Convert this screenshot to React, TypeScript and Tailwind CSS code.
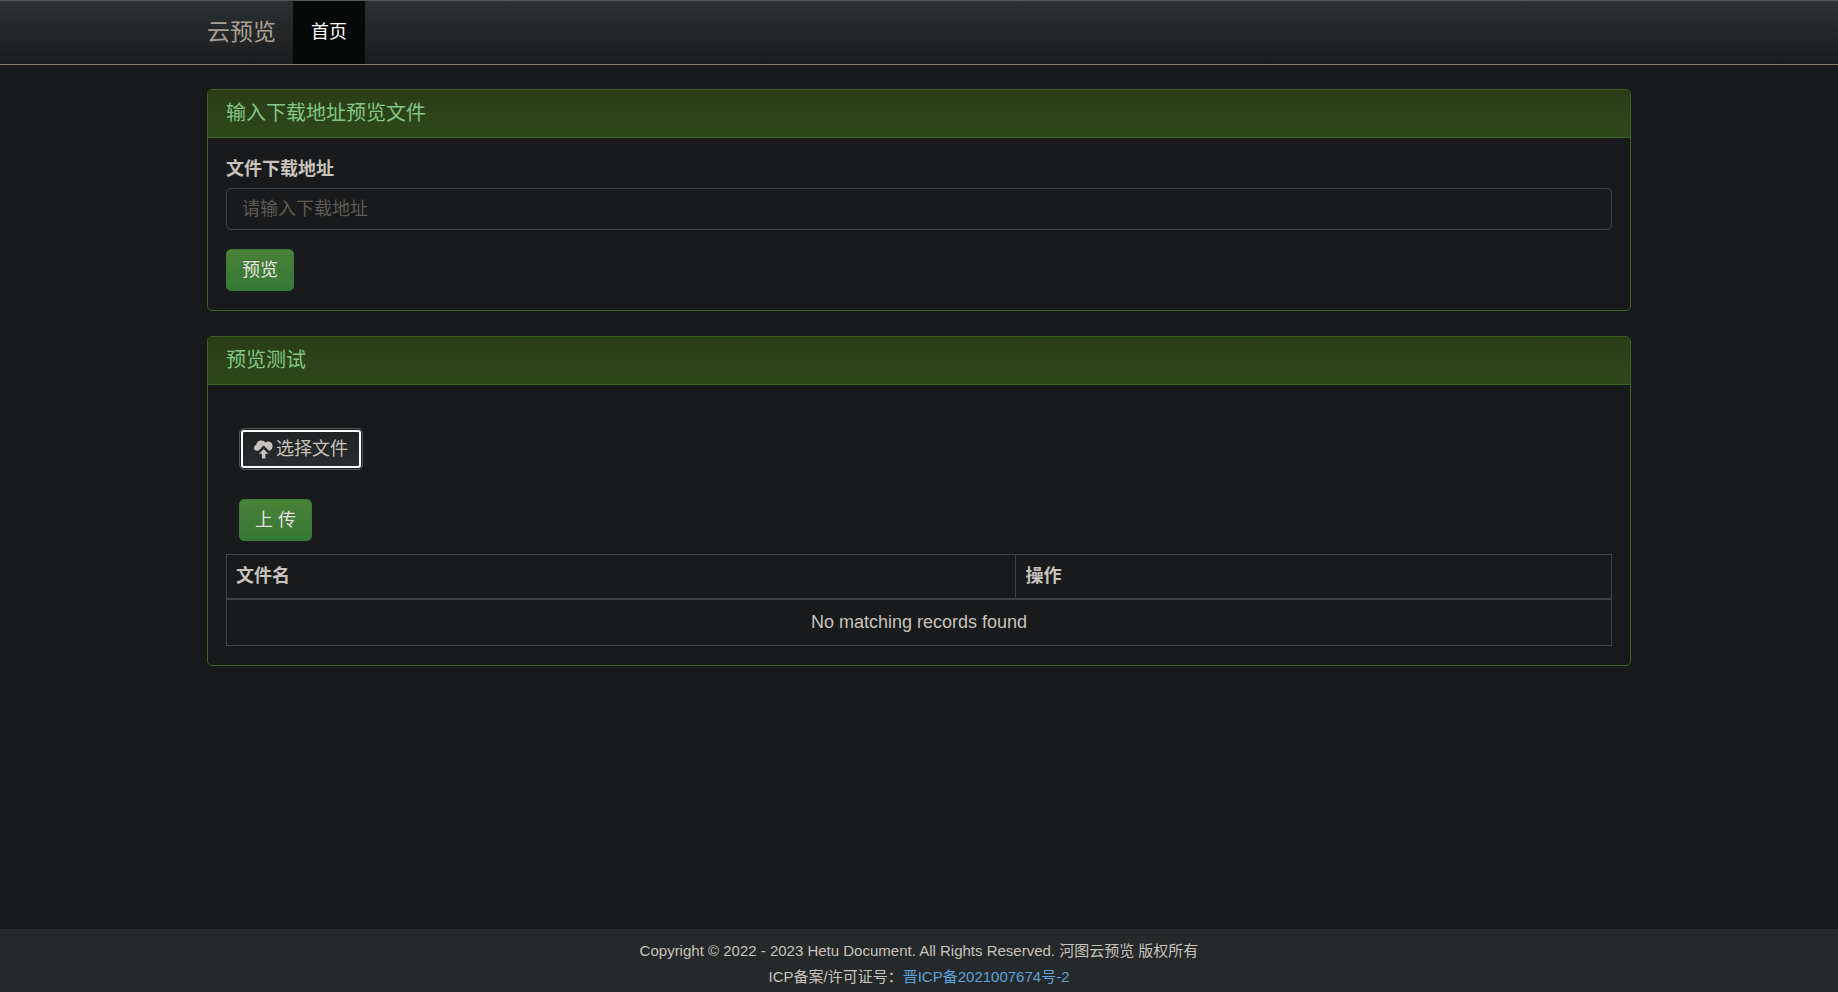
import { useState } from 'react';
import type { ReactNode } from 'react';

interface FileRecord {
  id: string;
  name: string;
}

const container = 'mx-auto w-full max-w-[1462px] px-[19px]';
const btn = 'rounded-[5px] border py-2 text-[18px] leading-6';
const btnGreen = `${btn} px-[15px] border-[#387c38] bg-linear-to-b from-[#4a8239] to-[#347834] text-[#e8e6e3] [text-shadow:0_-1px_0_rgba(0,0,0,0.2)]`;
const cell = 'border border-[#3f4346] px-[9px] text-[18px] leading-[25px]';

function CloudUploadIcon() {
  return (
    <svg className="mr-[3px] shrink-0" width="19" height="19" viewBox="0 0 19 19" fill="currentColor" aria-hidden="true">
      <path d="M3.4 10.8A3.1 3.1 0 0 1 0 7.8a3.2 3.2 0 0 1 2.3-3A4.9 4.9 0 0 1 7 0.6a5.4 5.4 0 0 1 4.6 2A4.2 4.2 0 0 1 18.6 6.2c0 2.3-1.4 4-3.6 4.5L9.7 5.6 4.5 10.8z" />
      <path d="M9.7 8.9l4.6 4.8h-2.9v4.7H7.9v-4.7H5z" />
    </svg>
  );
}

function Panel({ title, children }: { title: string; children: ReactNode }) {
  return (
    <section className="mb-[25px] rounded-[5px] border border-[#3e6224]">
      <div className="rounded-t-[4px] border-b border-[#3e6224] bg-linear-to-b from-[#2a3d18] to-[#2f481b] px-[18px] py-3">
        <h3 className="text-[20px] leading-[23px] text-[#83c784]">{title}</h3>
      </div>
      <div className="px-[18px] py-[19px]">{children}</div>
    </section>
  );
}

export default function App() {
  const [url, setUrl] = useState('');
  const [records] = useState<FileRecord[]>([]);

  return (
    <div className="flex min-h-screen flex-col bg-[#181a1b] font-['Liberation_Sans','Noto_Sans_CJK_SC',sans-serif] text-[18px] leading-[25px] text-[#c8c3bc]">
      {/* NAVBAR */}
      <nav className="border-t border-b border-t-[#54595c] border-b-[#8c8272] bg-linear-to-b from-[#2d3133] to-[#1b1c1d]">
        <div className={`${container} flex`}>
          <a href="#" className="py-[19px] pr-[17px] text-[23px] leading-[25px] text-[#a8a095]">云预览</a>
          <a href="#" className="bg-[#070808] px-[18px] py-[19px] text-white">首页</a>
        </div>
      </nav>

      <main className={`${container} flex-1 pt-6`}>
        <Panel title="输入下载地址预览文件">
          <form onSubmit={e => e.preventDefault()}>
            <label htmlFor="file-url" className="mb-[6px] block font-bold">文件下载地址</label>
            <input id="file-url" type="text" value={url} onChange={e => setUrl(e.target.value)}
              placeholder="请输入下载地址"
              className="mb-[19px] block h-[42px] w-full rounded-[5px] border border-[#3e4446] bg-[#181a1b] px-[15px] placeholder:text-[#5f5b55]" />
            <button type="submit" className={`${btnGreen} block`}>预览</button>
          </form>
        </Panel>

        <Panel title="预览测试">
          <div className="flex flex-col items-start gap-[29px] px-[13px] pt-6 pb-[13px]">
            <button type="button"
              className={`${btn} flex items-center border-[#52575a] bg-linear-to-b from-[#1f2122] to-[#2a2e30] px-[14px] text-[#c8c3bc] shadow-[inset_0_0_0_1px_#1b1d1e,inset_0_0_0_3px_#fff]`}>
              <CloudUploadIcon />
              选择文件
            </button>
            <button type="button" className={btnGreen}>上 传</button>
          </div>
          <table className="w-full table-fixed border-collapse text-left">
            <thead>
              <tr>
                <th className={`${cell} w-[57%] border-b-2 py-[9px]`}>文件名</th>
                <th className={`${cell} border-b-2 py-[9px]`}>操作</th>
              </tr>
            </thead>
            <tbody>
              {records.length === 0 ? (
                <tr>
                  <td colSpan={2} className={`${cell} py-[10px] text-center`}>No matching records found</td>
                </tr>
              ) : records.map(r => (
                <tr key={r.id}>
                  <td className={`${cell} py-[10px]`}>{r.name}</td>
                  <td className={`${cell} py-[10px]`}><a href="#">预览</a></td>
                </tr>
              ))}
            </tbody>
          </table>
        </Panel>
      </main>

      {/* FOOTER */}
      <footer className="bg-[#25292a] pt-[9px] pb-[2px] text-center text-[15px] leading-[26px]">
        <p>Copyright © 2022 - 2023 Hetu Document. All Rights Reserved. 河图云预览 版权所有</p>
        <p>ICP备案/许可证号：<a href="#" className="text-[#5ea3dc]">晋ICP备2021007674号-2</a></p>
      </footer>
    </div>
  );
}
